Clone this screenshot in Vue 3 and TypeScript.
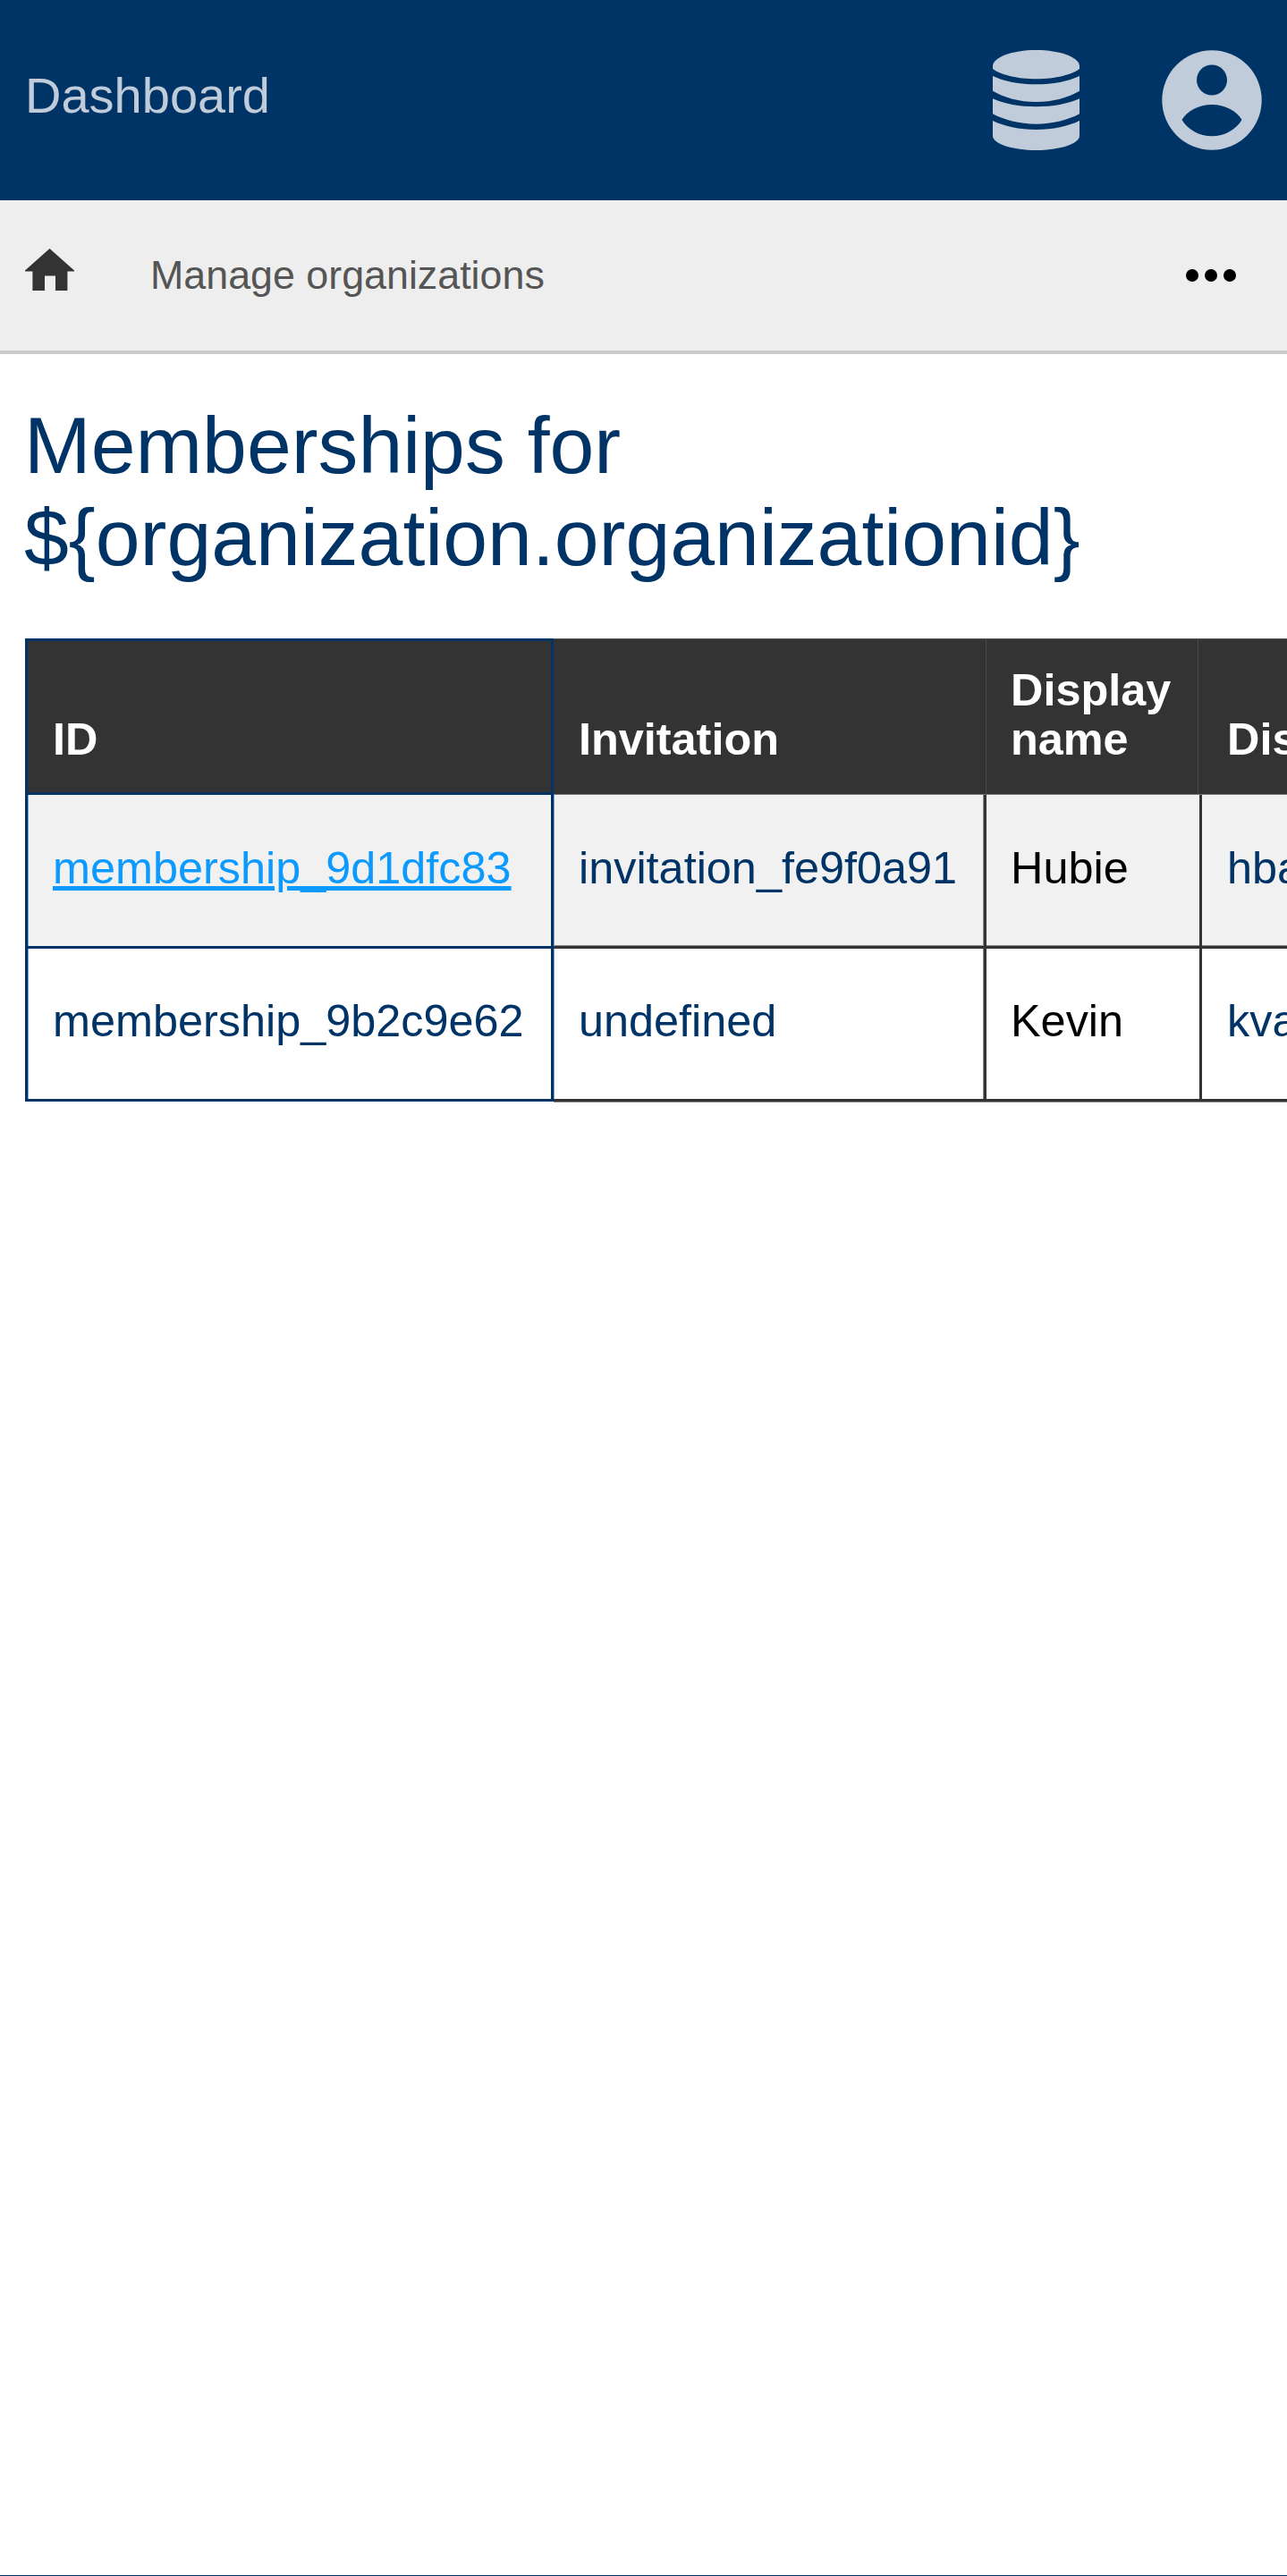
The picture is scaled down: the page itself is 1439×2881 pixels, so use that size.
<script setup lang="ts">
interface Row {
  id: string
  linked: boolean
  invitation: string
  name: string
  email: string
}
const rows: Row[] = [
  { id: 'membership_9d1dfc83', linked: true, invitation: 'invitation_fe9f0a91', name: 'Hubie', email: 'hbarrett@example.com' },
  { id: 'membership_9b2c9e62', linked: false, invitation: 'undefined', name: 'Kevin', email: 'kvance@example.com' }
]
</script>

<template>
  <div class="page">
    <header class="top">
      <span class="brand">Dashboard</span>
      <div class="top-icons">
        <svg width="97" height="112" viewBox="0 0 97 112" fill="#c0ccd9">
          <path d="M0 18C0 8 22 0 48.500 0S97 8 97 18V21C90 27 70 32.300 48.500 32.300S7 27 0 21Z" />
          <path d="M0 29C12 35 30 38.300 48.500 38.300S85 35 97 29V45.700C85 53 67 58 48.500 58S12 53 0 45.700Z" />
          <path d="M0 54.300C12 60 30 63.300 48.500 63.300S85 60 97 54.300V71.300C85 78 67 82.700 48.500 82.700S12 78 0 71.300Z" />
          <path d="M0 79C12 85 30 89 48.500 89S85 85 97 79V96C97 105 74 112 48.500 112S0 105 0 96Z" />
        </svg>
        <svg width="112" height="112" viewBox="0 0 112 112">
          <circle cx="56" cy="56" r="55.700" fill="#c0ccd9" />
          <circle cx="56" cy="33.500" r="17" fill="#003366" />
          <path d="M22.500 78C28 68 42 61 56 61S84 68 89.500 78C83 89 70 96.300 56 96.300S29 89 22.500 78Z" fill="#003366" />
        </svg>
      </div>
    </header>
    <nav class="crumbs">
      <svg class="home" width="55" height="47" viewBox="0 0 55 47" fill="#333333">
        <path d="M27.500 0L55 24.500V25.500H47.400V47H34V30.400H22V47H8.400V25.500H0V24.500Z" />
      </svg>
      <span class="crumb">Manage organizations</span>
      <div class="dots"><i></i><i></i><i></i></div>
    </nav>
    <main class="content">
      <h1>Memberships for<br />${organization.organizationid}</h1>
      <div class="table-wrap">
        <table>
          <colgroup>
            <col class="c1" /><col class="c2" /><col class="c3" /><col class="c4" />
          </colgroup>
          <thead>
            <tr>
              <th class="first">ID</th>
              <th>Invitation</th>
              <th class="third">Display name</th>
              <th class="nowrap">Display email</th>
            </tr>
          </thead>
          <tbody>
            <tr v-for="row in rows" :key="row.id">
              <td class="first">
                <a v-if="row.linked" href="#">{{ row.id }}</a>
                <template v-else>{{ row.id }}</template>
              </td>
              <td class="second">{{ row.invitation }}</td>
              <td class="third name">{{ row.name }}</td>
              <td>{{ row.email }}</td>
            </tr>
          </tbody>
        </table>
      </div>
    </main>
    <footer class="foot"></footer>
  </div>
</template>

<style>
html, body { margin: 0; overflow: hidden; }
</style>

<style scoped>
.page {
  width: 1439px;
  height: 2881px;
  display: flex;
  flex-direction: column;
  overflow: hidden;
  font-family: "Liberation Sans", Arial, sans-serif;
  background: #fff;
}
.top {
  height: 224px;
  flex: none;
  box-sizing: border-box;
  background: #003366;
  display: flex;
  align-items: center;
  justify-content: space-between;
  padding: 0 28px;
}
.brand { font-size: 56px; color: #c0ccd9; margin-bottom: 12px; }
.top-icons { display: flex; align-items: center; gap: 92px; }
.top-icons svg { display: block; }
.crumbs {
  height: 168px;
  flex: none;
  background: #eeeeee;
  border-bottom: 4px solid #cccccc;
  display: flex;
  align-items: center;
  padding: 0 57px 0 28px;
}
.home { flex: none; margin-top: -14px; }
.crumb { font-size: 44.800px; color: #555555; margin: -1px 0 0 85px; flex: 1; }
.dots { display: flex; gap: 7px; }
.dots i { width: 14px; height: 14px; border-radius: 50%; background: #000; }
.content { flex: 1; padding: 0 0 0 28px; }
h1 {
  margin: 51px 0 0 -1px;
  font-size: 89.600px;
  line-height: 103px;
  font-weight: 400;
  color: #003366;
}
.table-wrap { margin-top: 61px; width: 1616px; }
table {
  border-collapse: separate;
  border-spacing: 0;
  table-layout: fixed;
  width: 1616px;
  font-size: 50.400px;
  color: #003366;
}
.c1 { width: 591px; }
.c2 { width: 484px; }
.c3 { width: 241px; }
.c4 { width: 300px; }
th, td { padding-left: 28px; padding-right: 0; text-align: left; box-sizing: border-box; }
th.third, td.third { padding-left: 27px; }
th {
  background: #333333;
  color: #fff;
  font-weight: 700;
  height: 175px;
  vertical-align: bottom;
  line-height: 55px;
  padding-bottom: 34px;
  border-top: 1px solid #555555;
  border-bottom: 1px solid #777777;
}
th:nth-child(2) { border-right: 1px solid #4a4a4a; }
th:nth-child(3) { box-shadow: inset -4px 0 0 #333333, inset -5px 0 0 #4a4a4a; }
th.nowrap { white-space: nowrap; }
th.first {
  border: 3px solid #003366;
  padding-bottom: 32px;
}
td {
  height: 172px;
  vertical-align: top;
  padding-top: 53px;
  line-height: 58px;
  white-space: nowrap;
  border-right: 3px solid #333333;
  border-bottom: 3px solid #333333;
}
tbody tr:first-child td {
  background: #f1f1f1;
  box-shadow: inset 0 -1px 0 #888888;
}
tbody tr:last-child td {
  height: 171px;
  padding-top: 52px;
  box-shadow: 0 1px 0 #888888;
}
td.first {
  border-left: 3px solid #003366;
  border-right-color: #003366;
  border-bottom-color: #003366;
}
tbody tr td.first { box-shadow: inset 1px 0 0 #80a0c0; }
tbody tr:first-child td.second { box-shadow: inset 1px 0 0 #80a0c0, inset -1px 0 0 #888888, inset 0 -1px 0 #888888; }
tbody tr:last-child td.second { box-shadow: inset 1px 0 0 #80a0c0, inset -1px 0 0 #888888, 0 1px 0 #888888; }
td.name { color: #000; }
a { color: #0c9aff; }
.foot { height: 1px; flex: none; background: #003366; }
</style>
